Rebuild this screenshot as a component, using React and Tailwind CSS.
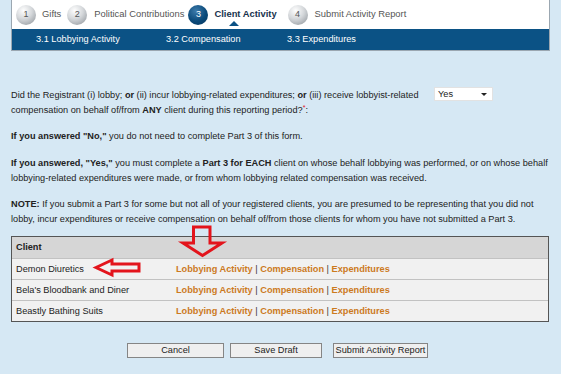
const clients = ["Demon Diuretics", "Bela's Bloodbank and Diner", "Beastly Bathing Suits"];

function StepCircle({ n, active }) {
  return (
    <span
      className={
        active
          ? "flex h-[20px] w-[20px] shrink-0 items-center justify-center rounded-full bg-[radial-gradient(circle_at_40%_30%,#3d7bab,#0b4a7a_55%,#06365c)] text-[9px] text-white"
          : "flex h-[20px] w-[20px] shrink-0 items-center justify-center rounded-full bg-[radial-gradient(circle_at_38%_28%,#ffffff,#d4d7da_45%,#a4a9ae_80%,#8e9398)] text-[9px] text-[#555]"
      }
    >
      {n}
    </span>
  );
}

function Header() {
  return (
    <div className="ml-[11px] w-[539px] border-x border-b border-[#9ba7b1] bg-white">
      <div className="flex h-[29px] items-center pl-[4px] text-[9.4px] text-[#555]">
        <StepCircle n="1" />
        <span className="ml-[6px]">Gifts</span>
        <span className="ml-[6px]">
          <StepCircle n="2" />
        </span>
        <span className="ml-[7px]">Political Contributions</span>
        <span className="ml-[4px]">
          <StepCircle n="3" active />
        </span>
        <span className="relative ml-[6px] font-bold text-[#17324d]">
          Client Activity
          <span className="absolute left-[15px] top-[14px] h-0 w-0 border-x-[5px] border-b-[5px] border-x-transparent border-b-[#0b5285]" />
        </span>
        <span className="ml-[11px]">
          <StepCircle n="4" />
        </span>
        <span className="ml-[7px]">Submit Activity Report</span>
      </div>
      <div className="flex h-[21px] items-center bg-[#0b5285] pl-[24px] text-[9.2px] text-white">
        <span className="w-[130px]">3.1 Lobbying Activity</span>
        <span className="w-[121px]">3.2 Compensation</span>
        <span>3.3 Expenditures</span>
      </div>
    </div>
  );
}

function ClientTable() {
  return (
    <div className="mt-[9px] w-[538px] border border-[#555]">
      <div className="flex h-[21px] items-center bg-[#d6d6d6] pl-[4px] font-bold">Client</div>
      {clients.map((c) => (
        <div key={c} className="flex h-[21px] items-center border-t border-[#c2c2c2] bg-[#f1f1f1]">
          <span className="w-[164px] pl-[4px]">{c}</span>
          <span className="text-[#333]">
            <span className="font-bold text-[#cc7a1e]">Lobbying Activity</span> |{" "}
            <span className="font-bold text-[#cc7a1e]">Compensation</span> |{" "}
            <span className="font-bold text-[#cc7a1e]">Expenditures</span>
          </span>
        </div>
      ))}
    </div>
  );
}

export default function App() {
  return (
    <div className="relative h-[374px] w-[561px] overflow-hidden bg-[#d6e8f4] font-['Liberation_Sans',Arial,sans-serif] text-[9.2px] text-[#222]">
      <Header />

      <div className="mt-[37px] px-[11px] leading-[15px]">
        <div className="flex items-start">
          <p className="w-[415px]">
            Did the Registrant (i) lobby; <b>or</b> (ii) incur lobbying-related expenditures; <b>or</b> (iii) receive
            lobbyist-related compensation on behalf of/from <b>ANY</b> client during this reporting period?
            <sup className="text-[7px] text-[#e0141c]">*</sup>:
          </p>
          <div className="ml-[8px] mt-[-1px] flex h-[14px] w-[59px] items-center justify-between border border-[#e2e2e2] bg-white pl-[3px] pr-[5px]">
            <span>Yes</span>
            <span className="h-0 w-0 border-x-[3px] border-t-[3px] border-x-transparent border-t-[#222]" />
          </div>
        </div>

        <p className="mt-[11px]">
          <b>If you answered "No,"</b> you do not need to complete Part 3 of this form.
        </p>

        <p className="mt-[12px] w-[550px]">
          <b>If you answered, "Yes,"</b> you must complete a <b>Part 3 for EACH</b> client on whose behalf lobbying
          was performed, or on whose behalf
          <br />
          lobbying-related expenditures were made, or from whom lobbying related compensation was received.
        </p>

        <p className="mt-[11px]">
          <b>NOTE:</b> If you submit a Part 3 for some but not all of your registered clients, you are presumed to be
          representing that you did not
          <br />
          lobby, incur expenditures or receive compensation on behalf of/from those clients for whom you have not
          submitted a Part 3.
        </p>

        <ClientTable />
      </div>

      <div className="mt-[21px] flex pl-[127px]">
        <button className="h-[15px] w-[97px] border border-[#858585] bg-[#efefef] text-[9.2px] text-[#222]">Cancel</button>
        <button className="ml-[6px] h-[15px] w-[92px] border border-[#858585] bg-[#efefef] text-[9.2px] text-[#222]">Save Draft</button>
        <button className="ml-[11px] h-[15px] w-[95px] border border-[#858585] bg-[#efefef] text-[9.2px] text-[#222]">
          Submit Activity Report
        </button>
      </div>

      <svg className="pointer-events-none absolute left-0 top-0" width="561" height="374" viewBox="0 0 561 374">
        <polygon
          points="193.5,227 210,227 210,243 222,243 202.5,255.5 183,243 193.5,243"
          fill="none"
          stroke="#e3141c"
          strokeWidth="3"
          strokeLinejoin="miter"
        />
        <polygon
          points="96,267.5 112,260 112,264 139,264 139,271 112,271 112,275"
          fill="none"
          stroke="#e3141c"
          strokeWidth="3"
          strokeLinejoin="miter"
        />
      </svg>
    </div>
  );
}
